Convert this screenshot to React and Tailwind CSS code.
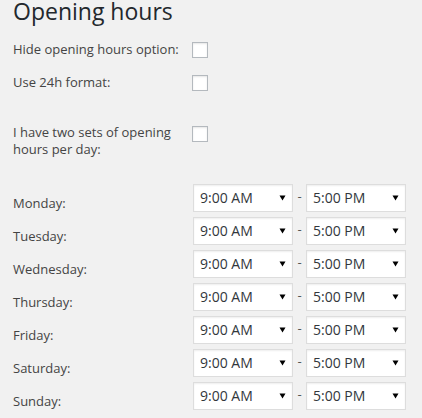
import React from 'react';

const days = ['Monday', 'Tuesday', 'Wednesday', 'Thursday', 'Friday', 'Saturday', 'Sunday'];

const Checkbox = () => (
    <span className="block w-4 h-4 bg-white border border-[#b4b9be] shadow-[inset_0_1px_2px_rgba(0,0,0,0.1)] mt-[2px]" />
);

const Select = ({ value }) => (
    <div className="w-[100px] h-[28px] bg-white border border-[#ddd] shadow-[inset_0_1px_2px_rgba(0,0,0,0.07)] flex items-center justify-between pl-[6px] pr-[6px]">
        <span className="text-[14px] leading-[20px] text-[#32373c]">{value}</span>
        <svg width="7" height="6" viewBox="0 0 7 6" className="mt-[-1px]">
            <path d="M0.5 0.5H6.5L3.5 5.5Z" fill="#000" />
        </svg>
    </div>
);

export default function App() {
    return (
        <div className="w-[422px] h-[418px] bg-[#f1f1f1] pl-[13px] text-[#23282d] font-['Open_Sans',sans-serif] overflow-hidden">
            <h2 className="text-[23px] leading-[27px] -mt-[2px] font-normal text-[#23282d]">Opening hours</h2>

            <div className="flex mt-[15px]">
                <div className="w-[179px] text-[13px] leading-[18px] text-[#444]">Hide opening hours option:</div>
                <Checkbox />
            </div>

            <div className="flex mt-[15px]">
                <div className="w-[179px] text-[13px] leading-[18px] text-[#444]">Use 24h format:</div>
                <Checkbox />
            </div>

            <div className="flex mt-[33px]">
                <div className="w-[179px] text-[13px] leading-[17px] text-[#444]">
                    I have two sets of opening hours per day:
                </div>
                <Checkbox />
            </div>

            <div className="mt-[26px]">
                {days.map((day) => (
                    <div key={day} className="flex h-[33px]">
                        <div className="w-[180px] pt-[10px] text-[13px] leading-[18px] text-[#444]">{day}:</div>
                        <Select value="9:00 AM" />
                        <div className="w-[13px] text-center text-[13px] leading-[24px] text-[#555]">-</div>
                        <Select value="5:00 PM" />
                    </div>
                ))}
            </div>
        </div>
    );
}
